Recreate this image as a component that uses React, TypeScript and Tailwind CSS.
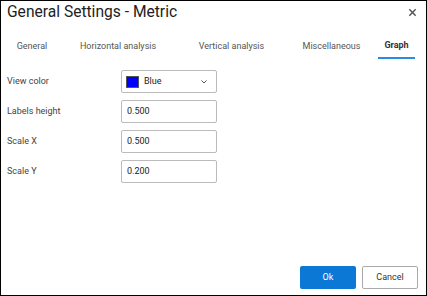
import React from "react";

export default function App() {
  const rows = [
    { label: "Labels height", value: "0.500" },
    { label: "Scale X", value: "0.500" },
    { label: "Scale Y", value: "0.200" },
  ];
  return (
    <div
      className="w-[427px] h-[296px] border border-black bg-white flex flex-col text-[#333]"
      style={{ fontFamily: "Roboto, 'Liberation Sans', sans-serif" }}
    >
      <div className="flex items-center justify-between pl-[6px] pr-[9px] pt-[1px] h-[22px]">
        <span className="text-[15.6px] text-[#222] leading-none">General Settings - Metric</span>
        <svg width="9" height="9" viewBox="0 0 10 10" className="text-[#555]">
          <path d="M1.5 1.5 L8.5 8.5 M8.5 1.5 L1.5 8.5" stroke="currentColor" strokeWidth="1.6" />
        </svg>
      </div>
      <div className="flex mt-[11px] pl-[5px] h-[25px] text-[9px] text-[#555]">
        <div className="w-[52px] flex items-center justify-center">General</div>
        <div className="w-[120px] flex items-center justify-center">Horizontal analysis</div>
        <div className="w-[107px] flex items-center justify-center">Vertical analysis</div>
        <div className="w-[93px] flex items-center justify-center">Miscellaneous</div>
        <div className="w-[37px] flex items-center justify-center font-bold text-[#333] border-b-2 border-[#2a8be0]">
          Graph
        </div>
      </div>
      <div className="flex flex-col pl-[6px] pt-[11px] gap-[7px] text-[9px]">
        <div className="flex items-center">
          <div className="w-[114px] text-[#444]">View color</div>
          <div className="w-[96px] h-[23px] border border-[#bbb] rounded-[2px] flex items-center pl-[4px] pr-[8px]">
            <span className="w-[13px] h-[12px] bg-[#0000ff] border border-[#555]" />
            <span className="ml-[5px] text-[#222]">Blue</span>
            <svg width="8" height="6" viewBox="0 0 8 6" className="ml-auto text-[#555]">
              <path d="M1.5 1.5 L4 4 L6.5 1.5" stroke="currentColor" strokeWidth="1" fill="none" />
            </svg>
          </div>
        </div>
        {rows.map((r) => (
          <div key={r.label} className="flex items-center">
            <div className="w-[114px] text-[#444]">{r.label}</div>
            <div className="w-[96px] h-[23px] border border-[#bbb] rounded-[2px] flex items-center pl-[5px] text-[#222]">
              {r.value}
            </div>
          </div>
        ))}
      </div>
      <div className="mt-auto flex justify-end gap-[6px] pr-[8px] pb-[6px]">
        <button className="w-[56px] h-[23px] bg-[#0b78d6] text-white text-[9px] rounded-[2px]">Ok</button>
        <button className="w-[56px] h-[23px] bg-white border border-[#aaa] text-[#333] text-[9px] rounded-[2px]">
          Cancel
        </button>
      </div>
    </div>
  );
}
